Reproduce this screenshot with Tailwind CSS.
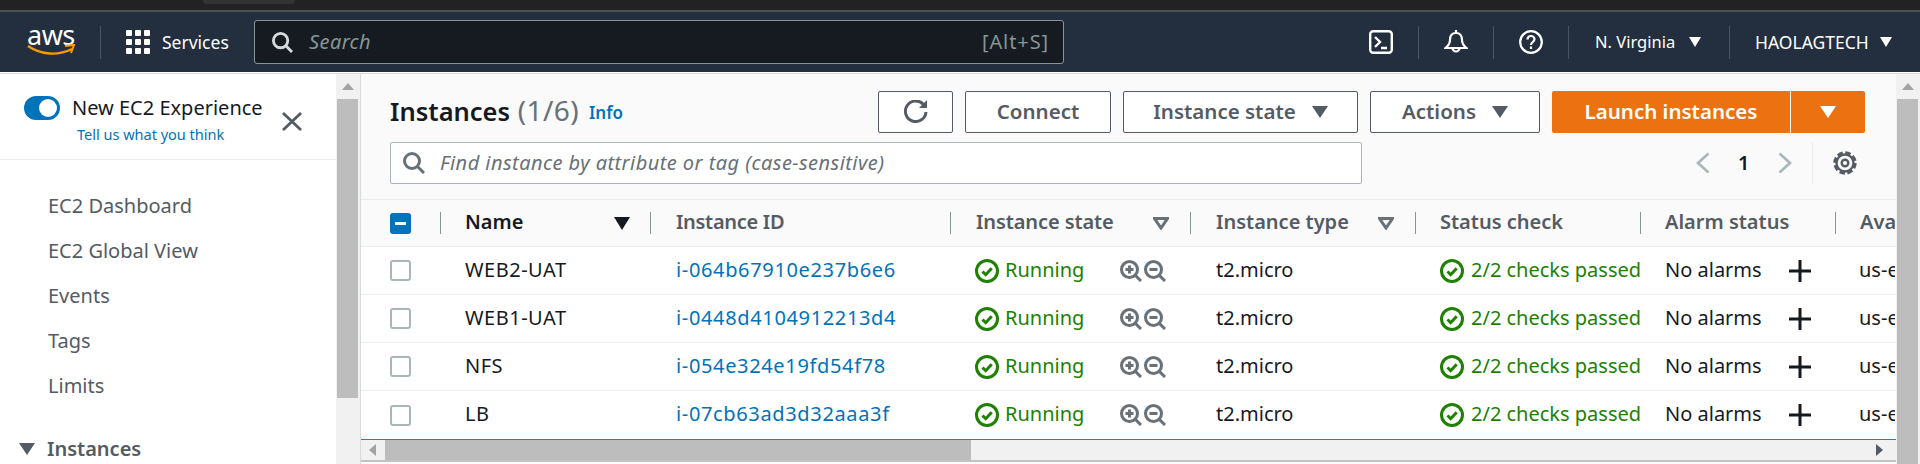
<!DOCTYPE html>
<html lang="en">
<head>
  <meta charset="UTF-8" />
  <title>Instances | EC2</title>
  <script src="https://cdn.jsdelivr.net/npm/@tailwindcss/browser@4"></script>
</head>
<body class="w-[1920px] h-[464px] overflow-hidden bg-white font-['Noto_Sans',sans-serif] text-[#16191f]">
  <!-- shared icons -->
  <svg class="hidden">
    <symbol id="check" viewBox="0 0 24 24"><circle cx="12" cy="12" r="10.5" fill="none" stroke="#1d8102" stroke-width="3"/><path d="M7.5 12.5l3.2 3.2 6-6.5" fill="none" stroke="#1d8102" stroke-width="3"/></symbol>
    <symbol id="zoomin" viewBox="0 0 22 22"><circle cx="9.5" cy="9.5" r="8" fill="none" stroke="#687078" stroke-width="3"/><path d="M5.5 9.5h8M9.5 5.5v8M15 15l6 6" fill="none" stroke="#687078" stroke-width="3"/></symbol>
    <symbol id="zoomout" viewBox="0 0 22 22"><circle cx="9.5" cy="9.5" r="8" fill="none" stroke="#687078" stroke-width="3"/><path d="M5.5 9.5h8M15 15l6 6" fill="none" stroke="#687078" stroke-width="3"/></symbol>
    <symbol id="plus" viewBox="0 0 22 22"><path d="M0 11h22M11 0v22" fill="none" stroke="#16191f" stroke-width="3"/></symbol>
    <symbol id="mag" viewBox="0 0 22 22"><circle cx="9" cy="9" r="7.5" fill="none" stroke="currentColor" stroke-width="3"/><path d="M14.5 14.5l6.5 6.5" fill="none" stroke="currentColor" stroke-width="3"/></symbol>
  </svg>

  <!-- browser strip -->
  <div class="h-[10px] bg-[#222222]"><div class="ml-[203px] w-[92px] h-[4px] rounded-b-lg bg-[#333333]"></div></div>
  <div class="h-[2px] bg-[#505050]"></div>

  <!-- top nav -->
  <header class="h-[60px] bg-[#232f3e] flex items-center text-white">
    <div class="w-[100px] h-[60px] relative">
      <span class="absolute left-[27px] top-[8px] text-[27px] leading-[30px] tracking-[-0.5px]">aws</span>
      <svg class="absolute left-[27px] top-[32px]" width="48" height="13" viewBox="0 0 48 13"><path d="M1 2c13 9 30 10 44 3" fill="none" stroke="#f90" stroke-width="2.4"/><path d="M38 2l9-1-3 8" fill="none" stroke="#f90" stroke-width="2"/></svg>
    </div>
    <div class="w-px h-[33px] bg-[#4a5563]"></div>
    <svg class="ml-[25px]" width="24" height="24" viewBox="0 0 24 24" fill="#fff">
      <rect width="6" height="6" rx="1"/><rect x="9" width="6" height="6" rx="1"/><rect x="18" width="6" height="6" rx="1"/>
      <rect y="9" width="6" height="6" rx="1"/><rect x="9" y="9" width="6" height="6" rx="1"/><rect x="18" y="9" width="6" height="6" rx="1"/>
      <rect y="18" width="6" height="6" rx="1"/><rect x="9" y="18" width="6" height="6" rx="1"/><rect x="18" y="18" width="6" height="6" rx="1"/>
    </svg>
    <span class="ml-[12px] w-[92px] text-[17.500px]">Services</span>
    <div class="w-[810px] h-[44px] bg-[#161b22] border border-[#879596] rounded-[3px] flex items-center pl-[17px] pr-[14px]">
      <svg class="text-[#d5dbdb]" width="21" height="21"><use href="#mag"/></svg>
      <span class="ml-[16px] text-[20px] tracking-[0.4px] italic text-[#879596]">Search</span>
      <span class="ml-auto text-[20px] tracking-[0.9px] text-[#879596]">[Alt+S]</span>
    </div>
    <svg class="ml-[305px]" width="24" height="24" viewBox="0 0 24 24" fill="none" stroke="#fff" stroke-width="2.4"><rect x="1.2" y="1.2" width="21.6" height="21.6" rx="3"/><path d="M6 7l5 5-5 5M12 18h6"/></svg>
    <div class="ml-[25px] w-px h-[33px] bg-[#4a5563]"></div>
    <svg class="ml-[25px]" width="24" height="24" viewBox="0 0 24 24" fill="none" stroke="#fff" stroke-width="2.2"><path d="M12 3c-4 0-6 3-6 7 0 4-2 6-4.500 8h21c-2.500-2-4.500-4-4.500-8 0-4-2-7-6-7zM12 0v3M8.500 18a3.500 3.500 0 0 0 7 0"/></svg>
    <div class="ml-[25px] w-px h-[33px] bg-[#4a5563]"></div>
    <svg class="ml-[25px]" width="24" height="24" viewBox="0 0 24 24" fill="none" stroke="#fff" stroke-width="2.2"><circle cx="12" cy="12" r="10.800"/><path d="M8.500 9.500c0-2 1.500-3.500 3.500-3.500s3.500 1.500 3.500 3.300c0 2.700-3.500 2.700-3.500 5.700M12 16.500v2.500"/></svg>
    <div class="ml-[25px] w-px h-[33px] bg-[#4a5563]"></div>
    <span class="ml-[26px] w-[94px] text-[16.500px] whitespace-nowrap">N. Virginia</span>
    <span class="w-0 h-0 border-x-[6px] border-x-transparent border-t-[10px] border-t-white"></span>
    <div class="ml-[28px] w-px h-[33px] bg-[#4a5563]"></div>
    <span class="ml-[25px] w-[125px] text-[17.500px] whitespace-nowrap">HAOLAGTECH</span>
    <span class="w-0 h-0 border-x-[6px] border-x-transparent border-t-[10px] border-t-white"></span>
  </header>
  <div class="h-[2px] bg-white border-b border-[#d5dbdb]"></div>

  <div class="flex h-[390px]">
    <!-- side navigation -->
    <aside class="w-[336px] shrink-0 overflow-hidden">
      <div class="h-[86px] border-b border-[#eaeded] flex pl-[24px] pt-[22px] relative">
        <div class="w-[36px] h-[24px] rounded-full bg-[#0073bb] flex items-center justify-end pr-[3px]"><div class="w-[18px] h-[18px] rounded-full bg-white"></div></div>
        <div class="ml-[12px]">
          <div class="text-[20px] leading-[24px] whitespace-nowrap">New EC2 Experience</div>
          <div class="ml-[5px] mt-[2px] text-[14.500px] leading-[24px] text-[#0073bb] whitespace-nowrap">Tell us what you think</div>
        </div>
        <svg class="absolute left-[282px] top-[38px]" width="20" height="19" viewBox="0 0 20 19"><path d="M1 1l18 17M19 1L1 18" fill="none" stroke="#545b64" stroke-width="2.800"/></svg>
      </div>
      <nav class="mt-[23px] pl-[48px] text-[20px] text-[#545b64]">
        <div class="h-[45px] flex items-center">EC2 Dashboard</div>
        <div class="h-[45px] flex items-center">EC2 Global View</div>
        <div class="h-[45px] flex items-center">Events</div>
        <div class="h-[45px] flex items-center">Tags</div>
        <div class="h-[45px] flex items-center">Limits</div>
      </nav>
      <div class="mt-[26px] pl-[19px] flex items-center font-semibold text-[20px] text-[#545b64]">
        <span class="w-0 h-0 border-x-[8px] border-x-transparent border-t-[12px] border-t-[#545b64]"></span>
        <span class="ml-[12px]">Instances</span>
      </div>
    </aside>

    <!-- side nav scrollbar -->
    <div class="w-[24px] shrink-0 bg-[#f1f1f1] pl-px pr-[2px]">
      <div class="h-[25px] flex items-center justify-center"><span class="w-0 h-0 border-x-[6px] border-x-transparent border-b-[7px] border-b-[#a3a3a3]"></span></div>
      <div class="h-[299px] bg-[#bdbdbd]"></div>
    </div>

    <!-- main -->
    <main class="w-[1536px] shrink-0 border-l border-[#d5dbdb] bg-[#fafafa] flex flex-col">
      <div class="flex items-center h-[42px] mt-[17px] pl-[29px] pr-[31px]">
        <h1 class="text-[25.500px] font-semibold whitespace-nowrap -mt-[4px]">Instances <span class="ml-px text-[28px] tracking-[0.4px] font-normal text-[#687078]">(1/6)</span></h1>
        <a class="ml-[10px] mt-[2px] text-[17px] font-semibold text-[#0073bb]">Info</a>
        <button class="ml-auto w-[75px] h-[42px] border border-[#545b64] rounded-[2px] bg-white flex items-center justify-center">
          <svg width="24" height="24" viewBox="0 0 24 24" fill="none" stroke="#545b64" stroke-width="3"><path d="M19.500 4.500A10.300 10.300 0 1 0 22 12"/><path d="M23 0v8h-8z" fill="#545b64" stroke="none"/></svg>
        </button>
        <button class="ml-[12px] w-[146px] h-[42px] pb-[2px] border border-[#545b64] rounded-[2px] bg-white font-semibold text-[20.500px] text-[#545b64]">Connect</button>
        <button class="ml-[12px] w-[235px] h-[42px] border border-[#545b64] rounded-[2px] bg-white font-semibold text-[20.500px] text-[#545b64] flex items-center justify-center gap-[16px]"><span class="pb-[2px]">Instance state</span><span class="w-0 h-0 border-x-[8px] border-x-transparent border-t-[12px] border-t-[#545b64]"></span></button>
        <button class="ml-[12px] w-[170px] h-[42px] border border-[#545b64] rounded-[2px] bg-white font-semibold text-[20.500px] text-[#545b64] flex items-center justify-center gap-[16px]"><span class="pb-[2px]">Actions</span><span class="w-0 h-0 border-x-[8px] border-x-transparent border-t-[12px] border-t-[#545b64]"></span></button>
        <button class="ml-[12px] w-[238px] h-[42px] pb-[2px] rounded-l-[2px] bg-[#ec7211] font-semibold text-[20.500px] text-white">Launch instances</button>
        <button class="ml-px w-[74px] h-[42px] rounded-r-[2px] bg-[#ec7211] flex items-center justify-center"><span class="w-0 h-0 border-x-[8px] border-x-transparent border-t-[12px] border-t-white"></span></button>
      </div>

      <div class="flex items-center h-[42px] mt-[9px] pl-[29px]">
        <div class="w-[972px] h-[42px] bg-white border border-[#aab7b8] rounded-[2px] flex items-center pl-[12px]">
          <svg class="text-[#687078]" width="22" height="22"><use href="#mag"/></svg>
          <span class="ml-[15px] text-[20px] tracking-[0.45px] italic text-[#687078]">Find instance by attribute or tag (case-sensitive)</span>
        </div>
        <svg class="ml-[334px]" width="14" height="22" viewBox="0 0 14 22"><path d="M12.500 1.500L2 11l10.500 9.500" fill="none" stroke="#aab7b8" stroke-width="2.600"/></svg>
        <span class="ml-[28px] w-[11px] text-[20px] font-semibold">1</span>
        <svg class="ml-[29px]" width="14" height="22" viewBox="0 0 14 22"><path d="M1.500 1.500L12 11 1.500 20.500" fill="none" stroke="#aab7b8" stroke-width="2.600"/></svg>
        <div class="ml-[20px] w-px h-[42px] bg-[#eaeded]"></div>
        <svg class="ml-[20px]" width="24" height="24" viewBox="0 0 24 24" fill="none" stroke="#545b64"><circle cx="12" cy="12" r="8.500" stroke-width="2.400"/><circle cx="12" cy="12" r="10.200" stroke-width="3" stroke-dasharray="5.500 2.500"/><circle cx="12" cy="12" r="3.300" stroke-width="2.400"/></svg>
      </div>

      <div class="mt-[15px] border-t border-[#eaeded] h-[47px] grid grid-cols-[79px_210px_300px_240px_225px_225px_195px_60px] items-center text-[20px] font-semibold text-[#545b64] overflow-hidden whitespace-nowrap">
        <div class="pl-[29px] flex"><span class="w-[21px] h-[21px] rounded-[3px] bg-[#0073bb] flex items-center justify-center"><span class="w-[11px] h-[3px] bg-white"></span></span></div>
        <div class="border-l border-[#879596] h-[22px] pl-[24px] pr-[20px] flex items-center justify-between text-[#16191f]"><span class="-mt-[2px]">Name</span><span class="w-0 h-0 border-x-[8px] border-x-transparent border-t-[13px] border-t-[#16191f]"></span></div>
        <div class="border-l border-[#879596] h-[22px] pl-[25px] flex items-center"><span class="-mt-[2px] tracking-[-0.3px]">Instance ID</span></div>
        <div class="border-l border-[#879596] h-[22px] pl-[25px] pr-[21px] flex items-center justify-between"><span class="-mt-[2px] tracking-[-0.1px]">Instance state</span><svg width="16" height="13" viewBox="0 0 16 13"><path d="M1.500 1.500h13L8 11z" fill="none" stroke="#687078" stroke-width="3"/></svg></div>
        <div class="border-l border-[#879596] h-[22px] pl-[25px] pr-[21px] flex items-center justify-between"><span class="-mt-[2px]">Instance type</span><svg width="16" height="13" viewBox="0 0 16 13"><path d="M1.500 1.500h13L8 11z" fill="none" stroke="#687078" stroke-width="3"/></svg></div>
        <div class="border-l border-[#879596] h-[22px] pl-[24px] flex items-center"><span class="-mt-[2px]">Status check</span></div>
        <div class="border-l border-[#879596] h-[22px] pl-[24px] flex items-center"><span class="-mt-[2px]">Alarm status</span></div>
        <div class="border-l border-[#879596] h-[22px] pl-[24px] flex items-center overflow-hidden"><span class="-mt-[2px]">Availability Zone</span></div>
      </div>
      <div id="rows" class="border-t border-[#eaeded] bg-white"></div>

      <!-- table scrollbar -->
      <div class="border-t border-[#0091c7] h-[23px] bg-[#f1f1f1] flex items-center border-b-2 border-b-[#c4c4c4]">
        <span class="ml-[8px] w-0 h-0 border-y-[6px] border-y-transparent border-r-[7px] border-r-[#a3a3a3]"></span>
        <div class="ml-[9px] w-[586px] h-full bg-[#bdbdbd]"></div>
        <span class="ml-[905px] w-0 h-0 border-y-[6px] border-y-transparent border-l-[7px] border-l-[#545b64]"></span>
      </div>
    </main>

    <!-- page scrollbar -->
    <div class="w-[24px] shrink-0 bg-[#f1f1f1] pl-px pr-[2px]">
      <div class="h-[25px] flex items-center justify-center"><span class="w-0 h-0 border-x-[6px] border-x-transparent border-b-[7px] border-b-[#a3a3a3]"></span></div>
      <div class="h-[365px] bg-[#bdbdbd]"></div>
    </div>
  </div>

  <script>
    const instances = [
      ["WEB2-UAT", "i-064b67910e237b6e6"],
      ["WEB1-UAT", "i-0448d4104912213d4"],
      ["NFS", "i-054e324e19fd54f78"],
      ["LB", "i-07cb63ad3d32aaa3f"],
    ];

    document.getElementById("rows").innerHTML = instances.map(([name, id]) => `
      <div class="h-[48px] border-b border-[#eaeded] last:border-b-0 grid grid-cols-[79px_210px_300px_240px_225px_225px_195px_60px] items-center text-[20px] whitespace-nowrap overflow-hidden">
        <div class="pl-[29px] flex"><span class="w-[21px] h-[21px] rounded-[3px] bg-white border-2 border-[#aab7b8]"></span></div>
        <div class="pl-[25px] pb-[2px] tracking-[0.5px]">${name}</div>
        <div class="pl-[26px] pb-[2px] tracking-[0.65px] text-[#0073bb]">${id}</div>
        <div class="pl-[25px] pr-[24px] flex items-center text-[#1d8102]">
          <svg width="24" height="24"><use href="#check"/></svg>
          <span class="ml-[6px] pb-[2px]">Running</span>
          <svg class="ml-auto" width="22" height="22"><use href="#zoomin"/></svg>
          <svg class="ml-[2px]" width="22" height="22"><use href="#zoomout"/></svg>
        </div>
        <div class="pl-[26px] pb-[2px]">t2.micro</div>
        <div class="pl-[25px] flex items-center text-[#1d8102] overflow-hidden">
          <svg class="shrink-0" width="24" height="24"><use href="#check"/></svg>
          <span class="ml-[7px] pb-[2px]">2/2 checks passed</span>
        </div>
        <div class="pl-[25px] flex items-center">
          <span class="w-[124px] pb-[2px]">No alarms</span>
          <svg width="22" height="22"><use href="#plus"/></svg>
        </div>
        <div class="pl-[24px] pb-[2px] overflow-hidden">us-east-1a</div>
      </div>`).join("");
  </script>
</body>
</html>
